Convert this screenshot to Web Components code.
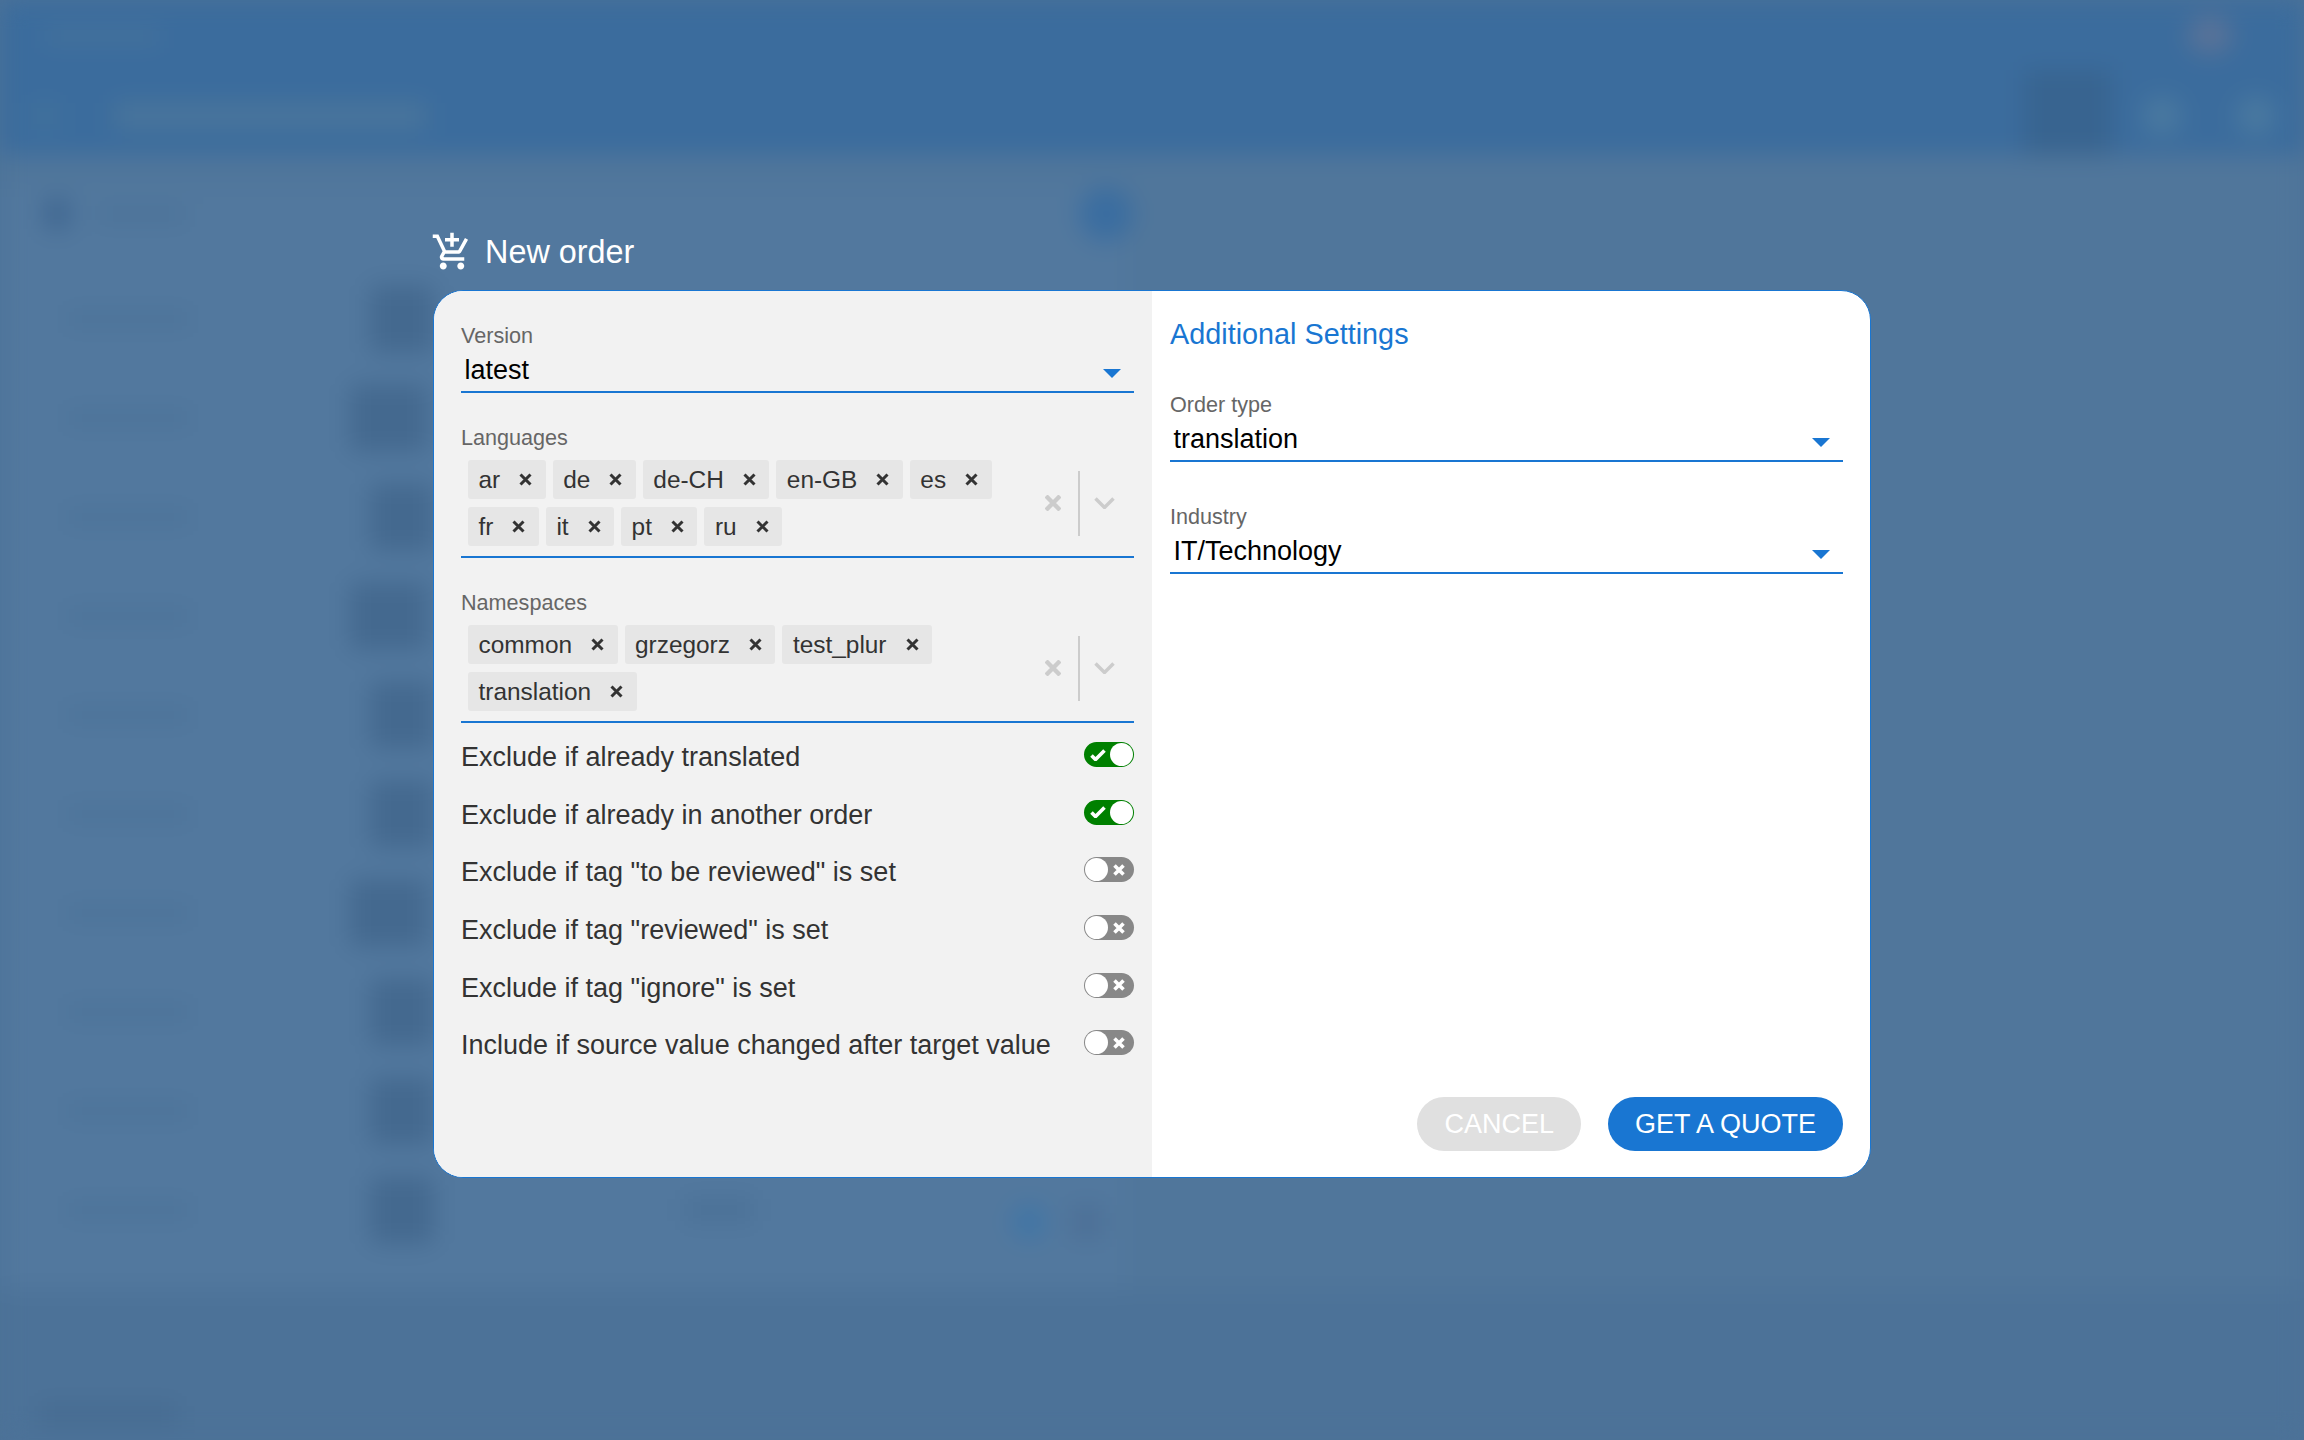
<!DOCTYPE html>
<html lang="en">
<head>
<meta charset="utf-8">
<title>New order</title>
<style>
  html, body { margin: 0; height: 100%; }
  body { background: #4f769b; font-family: "Liberation Sans", Arial, sans-serif; overflow: hidden; }
</style>
</head>
<body>
<order-page></order-page>

<script>
class BackdropPage extends HTMLElement {
  constructor() {
    super();
    this.attachShadow({ mode: "open" });
    const row = (w, iw, ml) => `
      <div class="row">
        <i class="line" style="width:${w}px"></i>
        <i class="thumb" style="width:${iw}px;margin-left:${ml}px"></i>
      </div>`;
    this.shadowRoot.innerHTML = `
    <style>
      :host { display: block; height: 1440px; overflow: hidden; background: #4c7298; }
      .blur { filter: blur(12px); height: 1440px; display: flex; flex-direction: column; }
      header { background: #3b6c9d; height: 155px; display: flex; flex-direction: column; flex: none; }
      .top { height: 70px; display: flex; align-items: center; justify-content: space-between; padding: 0 72px 0 44px; }
      .logo { width: 116px; height: 13px; background: #47739b; }
      .avatar { width: 44px; height: 38px; border-radius: 50%; background: #5a7398; }
      .bar { height: 85px; display: flex; align-items: center; padding: 6px 28px 0 30px; box-sizing: border-box; gap: 54px; }
      .bar .menu { width: 30px; height: 26px; background: #41719c; }
      .bar .name { width: 312px; height: 26px; background: #4a759b; }
      .bar .grow { flex: 1; }
      .bar .active { width: 88px; height: 85px; background: #386490; margin: -6px -24px 0 0; }
      .bar .dot { width: 40px; height: 40px; border-radius: 50%; background: #4a79a0; }
      main { flex: 1; background: #50769b; padding: 34px 0 0 0; }
      .card { width: 1125px; height: 1100px; background: #52789e; }
      .head { display: flex; align-items: center; height: 50px; padding: 0 20px 0 44px; gap: 26px; }
      .head .ic { width: 26px; height: 30px; background: #3f6690; }
      .head .tx { width: 90px; height: 13px; background: #4a7197; }
      .head .fab { margin-left: auto; width: 54px; height: 54px; border-radius: 50%; background: #3a6da0; margin-right: -28px; }
      .rows { display: flex; flex-direction: column; padding-top: 30px; }
      .row { height: 99px; display: flex; align-items: center; padding-left: 66px; box-sizing: border-box; }
      .line { height: 14px; background: #4b7298; display: block; }
      .thumb { height: 68px; background: #44698f; display: block; border-radius: 6px; }
      .extra { margin-left: 250px; width: 70px; height: 24px; background: #4b7197; display: block; }
      .pin { margin: 24px 0 0 258px; width: 34px; height: 34px; border-radius: 50%; background: #3f75a6; display: block; }
      .pin2 { margin: 24px 0 0 26px; width: 30px; height: 34px; background: #4c6f96; display: block; }
      footer { background: #4c7298; height: 150px; flex: none; display: flex; align-items: flex-end; padding: 0 0 16px 38px; box-sizing: border-box; }
      footer i { width: 140px; height: 20px; background: #466b91; display: block; }
    </style>
    <div class="blur">
      <header>
        <div class="top"><i class="logo"></i><i class="avatar"></i></div>
        <div class="bar">
          <i class="menu"></i><i class="name"></i><i class="grow"></i>
          <i class="active"></i><i class="dot"></i><i class="dot"></i>
        </div>
      </header>
      <main>
        <div class="card">
          <div class="head"><i class="ic"></i><i class="tx"></i><i class="fab"></i></div>
          <div class="rows">
            ${row(124, 64, 180)}${row(124, 78, 160)}${row(124, 64, 180)}${row(124, 78, 160)}${row(124, 64, 180)}
            ${row(124, 64, 180)}${row(124, 78, 160)}${row(124, 64, 180)}${row(124, 64, 180)}
            <div class="row">
              <i class="line" style="width:124px"></i><i class="thumb" style="width:64px;margin-left:180px"></i>
              <i class="extra"></i><i class="pin"></i><i class="pin2"></i>
            </div>
          </div>
        </div>
      </main>
      <footer><i></i></footer>
    </div>`;
  }
}

class FieldSelect extends HTMLElement {
  constructor() {
    super();
    this.attachShadow({ mode: "open" });
    this.shadowRoot.innerHTML = `
    <style>
      :host { display: block; }
      label { display: block; font-size: 21.6px; line-height: 34px; color: #666; }
      .box { display: flex; align-items: center; justify-content: space-between;
             height: 38px; box-sizing: content-box; border-bottom: 2px solid #1976d2; }
      .val { font-size: 27px; line-height: 34px; height: 34px; margin-bottom: 4px; padding-left: 3.5px; color: #000; }
      svg { width: 18px; height: 9px; margin: 3px 13px 0 0; fill: #1976d2; flex: none; }
    </style>
    <label>${this.getAttribute("label")}</label>
    <div class="box">
      <span class="val"><slot></slot></span>
      <svg viewBox="0 0 18 9"><path d="M0 0h18L9 9z"/></svg>
    </div>`;
  }
}

class ChipTag extends HTMLElement {
  constructor() {
    super();
    this.attachShadow({ mode: "open" });
    this.shadowRoot.innerHTML = `
    <style>
      :host { display: inline-flex; align-items: center; height: 39px; background: #e6e6e6;
              border-radius: 3px; padding: 0 13.5px 0 10.5px; font-size: 24.4px; color: #333; }
      svg { width: 13px; height: 13px; margin-left: 19px; flex: none; }
      path { stroke: #333; stroke-width: 3; fill: none; }
    </style>
    <slot></slot>
    <svg viewBox="0 0 13 13"><path d="M1.5 1.5l10 10M11.5 1.5l-10 10"/></svg>`;
  }
}

class ChipSelect extends HTMLElement {
  constructor() {
    super();
    this.attachShadow({ mode: "open" });
    this.shadowRoot.innerHTML = `
    <style>
      :host { display: block; margin-top: 28px; }
      label { display: block; font-size: 21.6px; line-height: 34px; color: #666; }
      .box { display: flex; align-items: center; border-bottom: 2px solid #1976d2; padding: 5px 0 10px 7px; }
      .chips { flex: 1; display: flex; flex-wrap: wrap; gap: 8px 7px; align-content: flex-start; }
      .tools { display: flex; align-items: center; flex: none; height: 65px; padding-right: 19px; }
      .clear { width: 16px; height: 16px; }
      .clear path { stroke: #ccc; stroke-width: 4.4; fill: none; }
      .sep { width: 2px; height: 65px; background: #ccc; margin: 0 14px 0 17px; }
      .open { width: 21px; height: 12px; }
      .open path { stroke: #ccc; stroke-width: 3.5; fill: none; }
    </style>
    <label>${this.getAttribute("label")}</label>
    <div class="box">
      <div class="chips"><slot></slot></div>
      <div class="tools">
        <svg class="clear" viewBox="0 0 16 16"><path d="M1 1l14 14M15 1L1 15"/></svg>
        <i class="sep"></i>
        <svg class="open" viewBox="0 0 21 12"><path d="M1.5 1.5l9 9 9-9"/></svg>
      </div>
    </div>`;
  }
}

class ToggleRow extends HTMLElement {
  constructor() {
    super();
    this.attachShadow({ mode: "open" });
    const on = this.hasAttribute("on");
    const icon = on
      ? `<svg class="ic" style="left:6px" viewBox="0 0 16 12"><path d="M1.5 6.5l4 4 9-9" /></svg>`
      : `<svg class="ic" style="right:9px;width:12px" viewBox="0 0 12 12"><path d="M1.5 1.5l9 9M10.5 1.5l-9 9" /></svg>`;
    this.shadowRoot.innerHTML = `
    <style>
      :host { display: flex; align-items: center; justify-content: space-between; height: 57.6px;
              font-size: 27px; color: #333; }
      .track { position: relative; width: 50px; height: 25px; border-radius: 13px; flex: none;
               background: ${on ? "#008000" : "#888"}; margin-top: -6px; }
      .knob { position: absolute; top: 1px; ${on ? "right: 1px" : "left: 1px"}; width: 23px; height: 23px;
              border-radius: 50%; background: #fff; }
      .ic { position: absolute; top: 6.5px; width: 16px; height: 12px; }
      .ic path { stroke: #fff; stroke-width: 3.6; fill: none; }
    </style>
    <span><slot></slot></span>
    <span class="track">${icon}<i class="knob"></i></span>`;
  }
}

class PillButton extends HTMLElement {
  constructor() {
    super();
    this.attachShadow({ mode: "open" });
    const bg = this.hasAttribute("disabled") ? "#e0e0e0" : "#1976d2";
    this.shadowRoot.innerHTML = `
    <style>
      :host { display: inline-flex; align-items: center; height: 54px; padding: 0 27px; border-radius: 27px;
              background: ${bg}; color: #fff; font-size: 27px; }
    </style>
    <slot></slot>`;
  }
}

class OrderDialog extends HTMLElement {
  constructor() {
    super();
    this.attachShadow({ mode: "open" });
    this.shadowRoot.innerHTML = `
    <style>
      :host { display: block; width: 1438px; }
      .title { display: flex; align-items: center; height: 58px; margin: 0 0 9px -2px; color: #fff; font-size: 32.4px; }
      .title svg { width: 42px; height: 42px; fill: #fff; margin-right: 12px; }
      .panel { display: flex; height: 888px; box-sizing: border-box; border: 1px solid #1976d2; border-radius: 30px;
               overflow: hidden; background: #fff; }
      .left { width: 718px; box-sizing: border-box; background: #f2f2f2; padding: 28px 18px 0 27px; flex: none; }
      .right { flex: 1; display: flex; flex-direction: column; padding: 26px 27px 26px 18px; }
      h2 { margin: 0 0 37px; font-weight: 400; font-size: 28.8px; line-height: 34px; color: #1976d2; }
      .right field-select + field-select { margin-top: 37.5px; }
      .toggles { margin-top: 6px; }
      .actions { margin-top: auto; display: flex; justify-content: flex-end; gap: 27px; }
    </style>
    <div class="title">
      <svg viewBox="0 0 24 24"><path d="M11 9h2V6h3V4h-3V1h-2v3H8v2h3v3zm-4 9c-1.1 0-1.99.9-1.99 2S5.9 22 7 22s2-.9 2-2-.9-2-2-2zm10 0c-1.1 0-1.99.9-1.99 2s.89 2 1.99 2 2-.9 2-2-.9-2-2-2zm-9.83-3.25l.03-.12.9-1.63h7.45c.75 0 1.41-.41 1.75-1.03l3.86-7.01L19.42 4h-.01l-1.1 2-2.76 5H8.53l-.13-.27L6.16 6l-.95-2-.94-2H1v2h2l3.6 7.59-1.35 2.45c-.16.28-.25.61-.25.96 0 1.1.9 2 2 2h12v-2H7.42c-.13 0-.25-.11-.25-.25z"/></svg>
      <span>New order</span>
    </div>
    <div class="panel">
      <div class="left">
        <field-select label="Version">latest</field-select>
        <chip-select label="Languages">
          <chip-tag>ar</chip-tag><chip-tag>de</chip-tag><chip-tag>de-CH</chip-tag><chip-tag>en-GB</chip-tag><chip-tag>es</chip-tag>
          <chip-tag>fr</chip-tag><chip-tag>it</chip-tag><chip-tag>pt</chip-tag><chip-tag>ru</chip-tag>
        </chip-select>
        <chip-select label="Namespaces">
          <chip-tag>common</chip-tag><chip-tag>grzegorz</chip-tag><chip-tag>test_plur</chip-tag><chip-tag>translation</chip-tag>
        </chip-select>
        <div class="toggles">
          <toggle-row on>Exclude if already translated</toggle-row>
          <toggle-row on>Exclude if already in another order</toggle-row>
          <toggle-row>Exclude if tag "to be reviewed" is set</toggle-row>
          <toggle-row>Exclude if tag "reviewed" is set</toggle-row>
          <toggle-row>Exclude if tag "ignore" is set</toggle-row>
          <toggle-row>Include if source value changed after target value</toggle-row>
        </div>
      </div>
      <div class="right">
        <h2>Additional Settings</h2>
        <field-select label="Order type">translation</field-select>
        <field-select label="Industry">IT/Technology</field-select>
        <div class="actions">
          <pill-button disabled>CANCEL</pill-button>
          <pill-button>GET A QUOTE</pill-button>
        </div>
      </div>
    </div>`;
  }
}

class OrderPage extends HTMLElement {
  constructor() {
    super();
    this.attachShadow({ mode: "open" });
    this.shadowRoot.innerHTML = `
    <style>
      :host { display: block; width: 2304px; height: 1440px; position: relative; overflow: hidden; }
      .overlay { position: absolute; inset: 0; display: flex; justify-content: center; padding-top: 223px; box-sizing: border-box; }
    </style>
    <backdrop-page></backdrop-page>
    <div class="overlay"><order-dialog></order-dialog></div>`;
  }
}

customElements.define("backdrop-page", BackdropPage);
customElements.define("field-select", FieldSelect);
customElements.define("chip-tag", ChipTag);
customElements.define("chip-select", ChipSelect);
customElements.define("toggle-row", ToggleRow);
customElements.define("pill-button", PillButton);
customElements.define("order-dialog", OrderDialog);
customElements.define("order-page", OrderPage);
</script>
</body>
</html>
